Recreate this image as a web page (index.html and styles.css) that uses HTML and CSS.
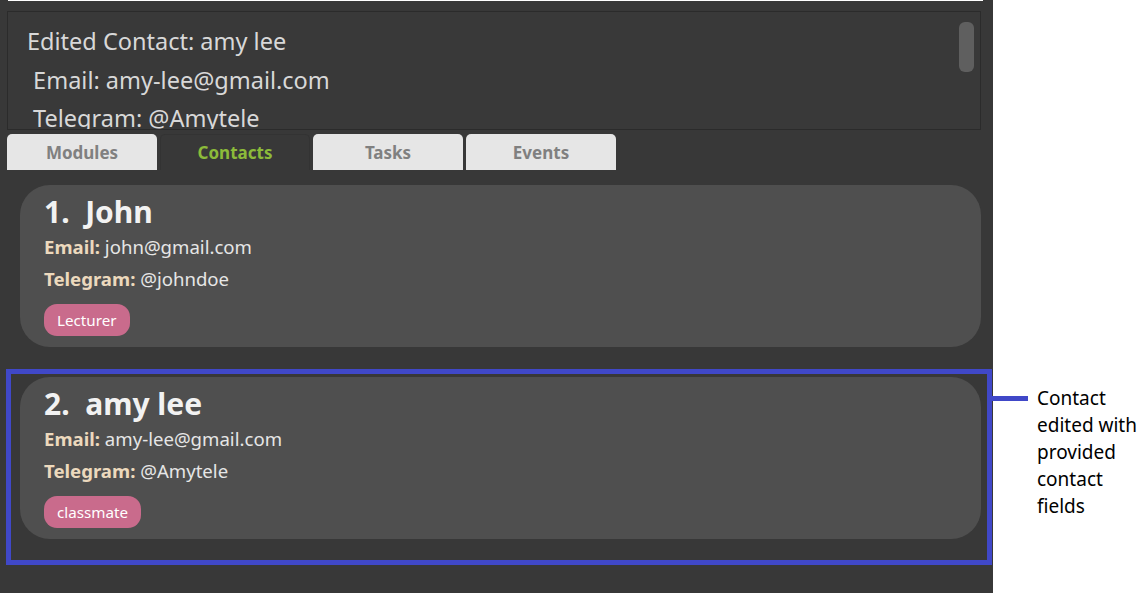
FILE: index.html
```html
<!DOCTYPE html>
<html>
<head>
<meta charset="utf-8">
<link rel="stylesheet" href="styles.css">
</head>
<body>
<div class="page">
  <div class="app">
    <div class="topline"></div>
    <div class="result">
      <div class="result-text">
        <div class="r1">Edited Contact: amy lee</div>
        <div class="r2">&nbsp;Email: amy-lee@gmail.com</div>
        <div class="r2">&nbsp;Telegram: @Amytele</div>
      </div>
      <div class="scroll"><div class="thumb"></div></div>
    </div>
    <div class="tabs">
      <div class="tab">Modules</div>
      <div class="tab active">Contacts</div>
      <div class="tab">Tasks</div>
      <div class="tab">Events</div>
    </div>
    <div class="list">
      <div class="card">
        <div class="name">1.&nbsp; John</div>
        <div class="field"><b>Email:</b> john@gmail.com</div>
        <div class="field"><b>Telegram:</b> @johndoe</div>
        <div class="tags"><span class="tag">Lecturer</span></div>
      </div>
      <div class="card">
        <div class="name">2.&nbsp; amy lee</div>
        <div class="field"><b>Email:</b> amy-lee@gmail.com</div>
        <div class="field"><b>Telegram:</b> @Amytele</div>
        <div class="tags"><span class="tag">classmate</span></div>
      </div>
    </div>
  </div>
  <div class="highlight"></div>
  <div class="connector"></div>
  <div class="note">Contact<br>edited with<br>provided<br>contact<br>fields</div>
</div>
</body>
</html>
```

FILE: styles.css
```css
* { box-sizing: border-box; }
html, body { margin: 0; padding: 0; background: #ffffff; }
body { font-family: "Noto Sans", "Open Sans", sans-serif; }
.page { position: relative; width: 1145px; height: 593px; display: flex; }
.app { width: 993px; height: 593px; background: #383838; display: flex; flex-direction: column; }
.topline { margin-left: 8px; width: 975px; height: 1px; background: #ffffff; }
.result {
  margin: 10px 12px 0 7px;
  height: 119px;
  border: 1px solid #2b2b2b;
  background: #393939;
  display: flex;
  overflow: hidden;
}
.result-text { flex: 1; padding: 10px 0 0 19px; color: #d8d8d8; font-size: 23.5px; line-height: 38.5px; }
.scroll { width: 21px; padding-top: 10px; padding-right: 5px; }
.thumb { width: 15px; height: 50px; background: #5f5f5f; border-radius: 6px; }
.tabs { display: flex; gap: 3px; margin: 4px 0 0 7px; height: 36px; }
.tab {
  width: 150px; height: 36px; background: #e6e6e6; border-radius: 5px 5px 0 0;
  color: #808080; font-weight: bold; font-size: 17px;
  display: flex; align-items: center; justify-content: center;
}
.tab.active { background: #383838; color: #8cbb3a; border: 1px solid #333333; border-bottom: none; }
.list { display: flex; flex-direction: column; gap: 30px; padding: 15px 12px 0 20px; }
.card {
  height: 162px; background: #4f4f4f; border-radius: 30px;
  padding: 8px 24px 0 24px;
}
.name { color: #f2f2f2; font-weight: bold; font-size: 30px; line-height: 38px; }
.field { color: #e6e6e6; font-size: 18.6px; line-height: 32px; }
.field b { color: #ecd9bd; }
.tags { margin-top: 9px; display: flex; }
.tag {
  background: #c96b8c; color: #ffffff; font-size: 15.2px; line-height: 32px;
  height: 32px; padding: 0 13px; border-radius: 13px;
}
.highlight {
  position: absolute; left: 6px; top: 369px; width: 986px; height: 196px;
  border: 5px solid #4048c8;
}
.connector { position: absolute; left: 992px; top: 396px; width: 36px; height: 5px; background: #4048c8; }
.note {
  position: absolute; left: 1037px; top: 385px;
  color: #000000; font-size: 19px; line-height: 27px;
}
```
